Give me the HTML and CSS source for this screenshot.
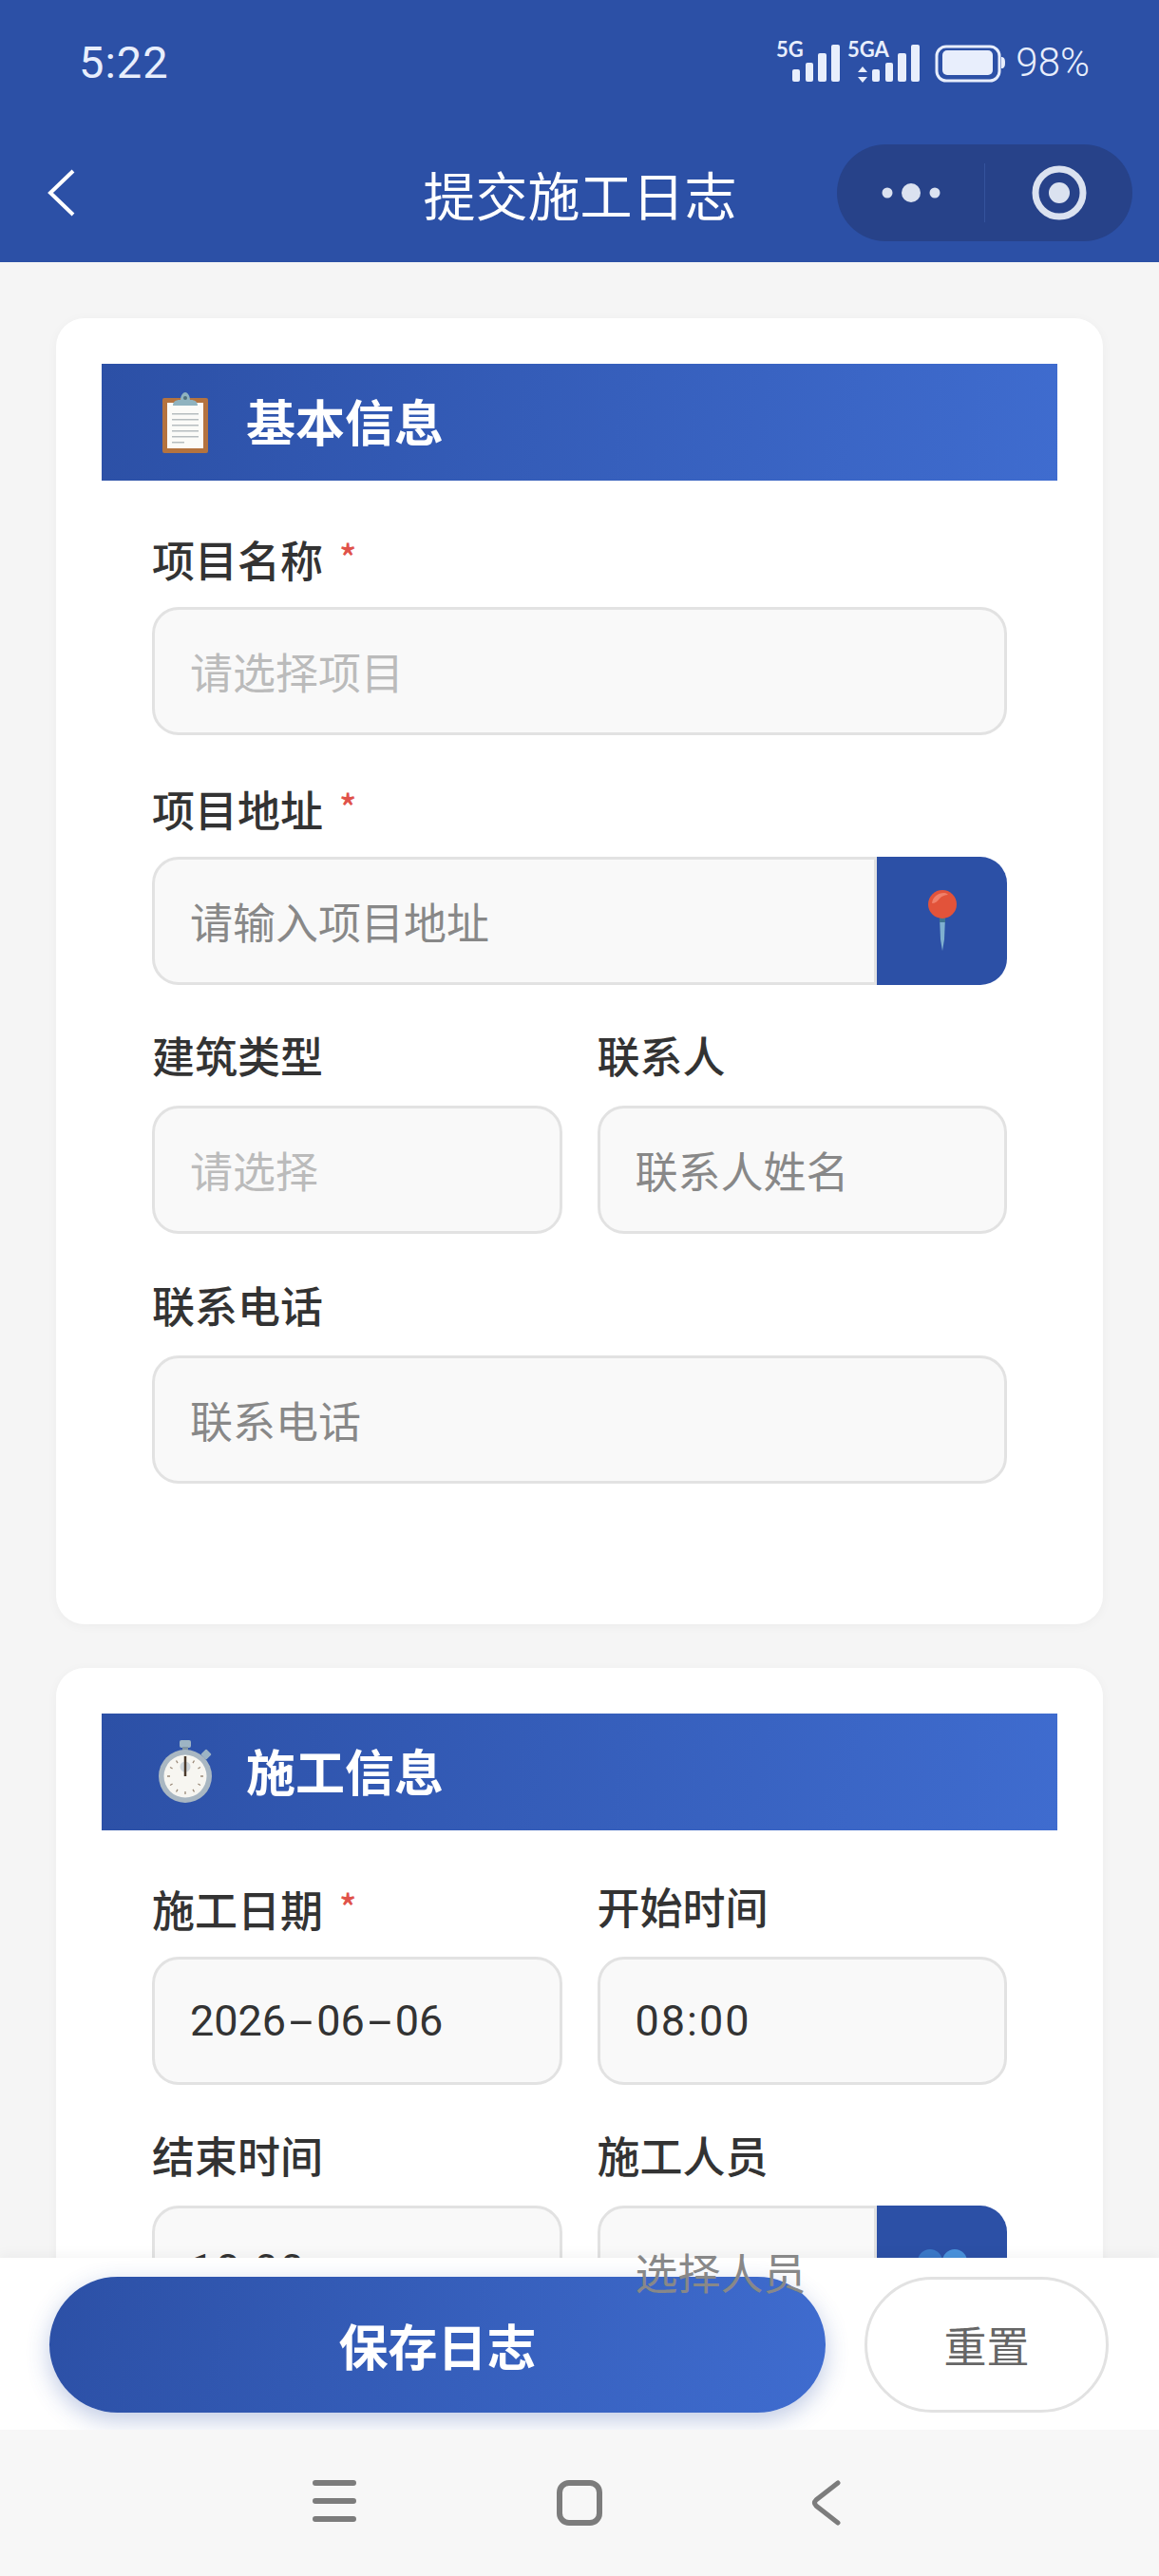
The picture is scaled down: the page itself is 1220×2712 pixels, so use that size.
FILE: index.html
```html
<!DOCTYPE html>
<html lang="zh-CN">
<head>
    <meta charset="UTF-8">
    <meta name="viewport" content="width=device-width, initial-scale=1.0">
    <title>提交施工日志</title>
    <link rel="stylesheet" href="styles.css">
</head>
<body>
    <header class="topbar">
        <div class="status">
            <span class="status-time">5:22</span>
            <div class="status-right">
                <svg class="status-icons" width="242" height="54" viewBox="820 30 242 54">
                    <g fill="#e8eefc">
                        <text x="820" y="56" font-family="Lato, sans-serif" font-size="22" font-weight="700">5G</text>
                        <rect x="837" y="69" width="8" height="13" rx="2"/>
                        <rect x="851" y="62" width="8" height="20" rx="2"/>
                        <rect x="864" y="52" width="9" height="30" rx="2"/>
                        <rect x="878" y="43" width="9" height="39" rx="2"/>
                        <text x="895" y="56" font-family="Lato, sans-serif" font-size="22" font-weight="700">5GA</text>
                        <path d="M911 66l5 6h-10zM911 83l5-6h-10z"/>
                        <rect x="921" y="69" width="8" height="13" rx="2"/>
                        <rect x="935" y="62" width="8" height="20" rx="2"/>
                        <rect x="948" y="52" width="9" height="30" rx="2"/>
                        <rect x="962" y="43" width="9" height="39" rx="2"/>
                        <rect x="995" y="49" width="53" height="26" rx="5"/>
                        <path d="M1057 56c3 0 4 2 4 6s-1 6-4 6z"/>
                    </g>
                    <rect x="989" y="45" width="66" height="36" rx="10" fill="none" stroke="#e8eefc" stroke-width="3"/>
                </svg>
                <span class="status-pct">98%</span>
            </div>
        </div>
        <div class="navrow">
            <svg class="nav-back" width="32" height="50" viewBox="0 0 32 50">
                <path d="M28 2L4 25l24 23" fill="none" stroke="#fff" stroke-width="4"/>
            </svg>
            <h1 class="nav-title">提交施工日志</h1>
            <div class="capsule">
                <div class="capsule-dots">
                    <svg width="64" height="24" viewBox="0 0 64 24">
                        <circle cx="7" cy="12" r="5.5" fill="#dbe2f0"/>
                        <circle cx="32" cy="12" r="10" fill="#dbe2f0"/>
                        <circle cx="57" cy="12" r="5.5" fill="#dbe2f0"/>
                    </svg>
                </div>
                <div class="capsule-target">
                    <svg width="60" height="60" viewBox="0 0 60 60">
                        <circle cx="30" cy="30" r="25" fill="none" stroke="#dbe2f0" stroke-width="7"/>
                        <circle cx="30" cy="30" r="11" fill="#dbe2f0"/>
                    </svg>
                </div>
            </div>
        </div>
    </header>

    <main class="content">
        <section class="card">
            <div class="card-head">
                <span class="card-icon">
                    <svg width="48" height="64" viewBox="0 0 48 64">
                        <rect x="0" y="6" width="48" height="58" rx="2" fill="#b4733f"/>
                        <rect x="5" y="11" width="38" height="48" fill="#fbfbf8"/>
                        <g fill="#b6bdbf">
                            <rect x="10" y="22" width="28" height="1.5"/>
                            <rect x="10" y="28" width="28" height="1.5"/>
                            <rect x="10" y="34" width="28" height="1.5"/>
                            <rect x="10" y="40" width="28" height="1.5"/>
                            <rect x="10" y="46" width="28" height="1.5"/>
                            <rect x="10" y="52" width="13" height="1.5"/>
                        </g>
                        <path d="M11 14c0-4 3-6 7-6h1c0-5 3-8 5-8s5 3 5 8h1c4 0 7 2 7 6z" fill="#8fb3bf"/>
                        <circle cx="24" cy="6" r="2" fill="#4f6f7c"/>
                    </svg>
                </span>
                <h2 class="card-title">基本信息</h2>
            </div>
            <div class="form">
                <div class="group">
                    <div class="label">项目名称<span class="req">*</span></div>
                    <div class="field"><span class="hint-light">请选择项目</span></div>
                </div>
                <div class="group">
                    <div class="label">项目地址<span class="req">*</span></div>
                    <div class="field-wrap">
                        <div class="field field-joined"><span class="hint">请输入项目地址</span></div>
                        <div class="field-btn">
                            <svg width="32" height="64" viewBox="0 0 32 64">
                                <path d="M13 28h6l-1 24-2 12-2-12z" fill="#7fb0cf"/>
                                <rect x="13" y="28" width="6" height="6" fill="#3f7590"/>
                                <circle cx="16" cy="15" r="15" fill="#e2533a"/>
                                <path d="M5 14C6 7 11 3 18 3c2 0 3 1 4 2-3 0-6 1-9 4-2 3-5 5-8 5z" fill="#f0806a"/>
                            </svg>
                        </div>
                    </div>
                </div>
                <div class="group group-two">
                    <div>
                        <div class="label">建筑类型</div>
                        <div class="field"><span class="hint-light">请选择</span></div>
                    </div>
                    <div>
                        <div class="label">联系人</div>
                        <div class="field"><span class="hint">联系人姓名</span></div>
                    </div>
                </div>
                <div class="group">
                    <div class="label">联系电话</div>
                    <div class="field"><span class="hint">联系电话</span></div>
                </div>
            </div>
        </section>

        <section class="card">
            <div class="card-head">
                <span class="card-icon">
                    <svg width="56" height="66" viewBox="0 0 56 66">
                        <rect x="22" y="0" width="12" height="8" rx="2" fill="#9db4c4"/>
                        <rect x="25" y="7" width="6" height="5" fill="#8296a3"/>
                        <rect x="46" y="11" width="8" height="8" rx="1" transform="rotate(45 50 15)" fill="#9db4c4"/>
                        <circle cx="28" cy="38" r="28" fill="#a9b7c2"/>
                        <circle cx="28" cy="38" r="22.5" fill="#f7f6f1"/>
                        <circle cx="28" cy="28" r="5.5" fill="#cfd6db"/>
                        <g stroke="#9a8a78" stroke-width="1.3">
                            <path d="M28 19v3M28 54v3M9 38h3M44 38h3M18.500 21.500l1.500 2.600M37.500 21.500l-1.500 2.600M18.500 54.500l1.500-2.600M37.500 54.500l-1.500-2.600M12 28.500l2.600 1.500M44 28.500l-2.600 1.500M12 47.500l2.600-1.500M44 47.500l-2.600-1.500"/>
                        </g>
                        <path d="M28 17v21" stroke="#4a3a2c" stroke-width="2.500"/>
                    </svg>
                </span>
                <h2 class="card-title">施工信息</h2>
            </div>
            <div class="form">
                <div class="group group-two">
                    <div>
                        <div class="label">施工日期<span class="req">*</span></div>
                        <div class="field"><span class="value">2026<span class="dash">-</span>06<span class="dash">-</span>06</span></div>
                    </div>
                    <div>
                        <div class="label">开始时间</div>
                        <div class="field"><span class="value value-time">08:00</span></div>
                    </div>
                </div>
                <div class="group group-two">
                    <div>
                        <div class="label">结束时间</div>
                        <div class="field"><span class="value value-time">18:00</span></div>
                    </div>
                    <div>
                        <div class="label">施工人员</div>
                        <div class="field-wrap">
                            <div class="field field-joined"><span class="hint hint-top">选择人员</span></div>
                            <div class="field-btn">
                                <svg width="62" height="50" viewBox="0 0 62 50">
                                    <circle cx="18" cy="16" r="13" fill="#3a78c8"/>
                                    <circle cx="44" cy="16" r="13" fill="#4a92dc"/>
                                </svg>
                            </div>
                        </div>
                    </div>
                </div>
            </div>
        </section>
    </main>

    <footer class="actions">
        <button class="btn-save" type="button">保存日志</button>
        <button class="btn-reset" type="button">重置</button>
    </footer>

    <div class="sysnav">
        <svg width="46" height="44" viewBox="0 0 46 44">
            <path d="M3 3h40M3 22h40M3 41h40" stroke="#7c7c7c" stroke-width="6" stroke-linecap="round"/>
        </svg>
        <svg class="sysnav-home" width="48" height="48" viewBox="0 0 48 48">
            <rect x="3" y="3" width="42" height="42" rx="10" fill="none" stroke="#7c7c7c" stroke-width="6"/>
        </svg>
        <svg width="32" height="48" viewBox="0 0 32 48">
            <path d="M29 3L6 21c-2 2-2 4 0 6l23 18" fill="none" stroke="#7c7c7c" stroke-width="5" stroke-linecap="round"/>
        </svg>
    </div>
</body>
</html>
```

FILE: styles.css
```css
* {
    box-sizing: border-box;
}
html, body {
    margin: 0;
    padding: 0;
}
body {
    width: 1220px;
    height: 2712px;
    overflow: hidden;
    display: flex;
    flex-direction: column;
    font-family: "Noto Sans CJK SC", "Noto Sans", sans-serif;
    background: #f5f5f5;
    color: #333;
}
.topbar {
    height: 276px;
    flex: none;
    background: #2c50a6;
    color: #fff;
}
.status {
    height: 130px;
    display: flex;
    align-items: center;
    justify-content: space-between;
    padding: 0 73px 0 83px;
    color: #e8eefc;
    font-family: Roboto, sans-serif;
}
.status-time {
    font-size: 47px;
    letter-spacing: 1px;
}
.status-right {
    display: flex;
    align-items: center;
    gap: 10px;
}
.status-icons {
    margin-bottom: 8px;
}
.status-pct {
    font-size: 42px;
    font-weight: 300;
}
.navrow {
    height: 146px;
    display: grid;
    grid-template-columns: 1fr auto 1fr;
    align-items: center;
    padding: 0 28px 0 49px;
}
.nav-title {
    margin: 0;
    font-size: 55px;
    font-weight: 400;
    line-height: 1;
    position: relative;
    left: -10px;
}
.capsule {
    justify-self: end;
    width: 311px;
    height: 102px;
    display: flex;
    background: #274289;
    border-radius: 51px;
}
.capsule-dots {
    width: 155px;
    display: flex;
    align-items: center;
    justify-content: center;
    padding-left: 1px;
}
.capsule-target {
    flex: 1;
    display: flex;
    align-items: center;
    justify-content: center;
    margin: 20px 0;
    border-left: 1px solid #35539c;
}
.content {
    flex: 1;
    min-height: 0;
    padding: 59px 59px 0;
}
.card {
    background: #fff;
    border-radius: 30px;
    padding: 48px 48px 100px;
    margin-bottom: 46px;
    box-shadow: 0 2px 12px rgba(0,0,0,0.04);
}
.card-head {
    height: 123px;
    display: flex;
    align-items: center;
    gap: 31px;
    padding-left: 55px;
    background: linear-gradient(100deg, #2c50a6, #3f6ccf);
}
.card-icon {
    width: 66px;
    display: flex;
    justify-content: center;
}
.card-title {
    margin: 0 0 2px;
    font-size: 52px;
    font-weight: 700;
    line-height: 1.2;
    color: #fff;
}
.form {
    padding: 53px 53px 0;
}
.group {
    margin-bottom: 47.670px;
}
.group-two {
    display: grid;
    grid-template-columns: 1fr 1fr;
    column-gap: 37px;
}
.label {
    height: 62px;
    margin-bottom: 18px;
    font-size: 45px;
    font-weight: 500;
    line-height: 54px;
    color: #333;
}
.req {
    margin-left: 17px;
    font-size: 38px;
    color: #e0524a;
    vertical-align: 6px;
}
.field {
    height: 135px;
    display: flex;
    align-items: center;
    padding: 0 37px;
    background: #f9f9f9;
    border: 3px solid #e2e2e2;
    border-radius: 28px;
    font-size: 45px;
}
.hint {
    color: #888;
}
.hint-light {
    color: #bbb;
}
/* this one sits over the bottom bar, same as in the app */
.hint-top {
    position: relative;
    z-index: 5;
    top: 2px;
}
.value {
    color: #333;
    font-family: Roboto, sans-serif;
    font-size: 45px;
    line-height: 1;
}
.value-time {
    letter-spacing: 2px;
}
.dash {
    display: inline-block;
    width: 32px;
    text-align: center;
    transform: scaleX(2);
}
.field-wrap {
    display: flex;
}
.field-joined {
    flex: 1;
    min-width: 0;
    border-radius: 28px 0 0 28px;
}
.field-btn {
    width: 137px;
    height: 135px;
    flex: none;
    display: flex;
    align-items: center;
    justify-content: center;
    background: #2c50a6;
    border-radius: 0 28px 28px 0;
}
.actions {
    position: relative;
    z-index: 2;
    height: 181px;
    flex: none;
    display: flex;
    justify-content: space-between;
    padding: 20px 53px 0 52px;
    background: #fff;
    box-shadow: 0 -4px 12px rgba(0,0,0,0.04);
}
.btn-save, .btn-reset {
    height: 143px;
    padding: 0;
    font-family: inherit;
    border-radius: 72px;
}
.btn-save {
    width: 817px;
    border: none;
    background: linear-gradient(100deg, #2c50a6, #3f6ccf);
    color: #fff;
    font-size: 52px;
    font-weight: 700;
    box-shadow: 0 8px 24px rgba(44,80,166,0.3);
}
.btn-reset {
    width: 257px;
    background: #fff;
    border: 3px solid #e2e2e2;
    color: #666;
    font-size: 45px;
    font-weight: 400;
}
.sysnav {
    position: relative;
    z-index: 2;
    height: 154px;
    flex: none;
    display: flex;
    align-items: flex-start;
    padding: 53px 0 0 329px;
    background: #f7f7f7;
}
.sysnav-home {
    margin: 0 219px 0 211px;
}
```
